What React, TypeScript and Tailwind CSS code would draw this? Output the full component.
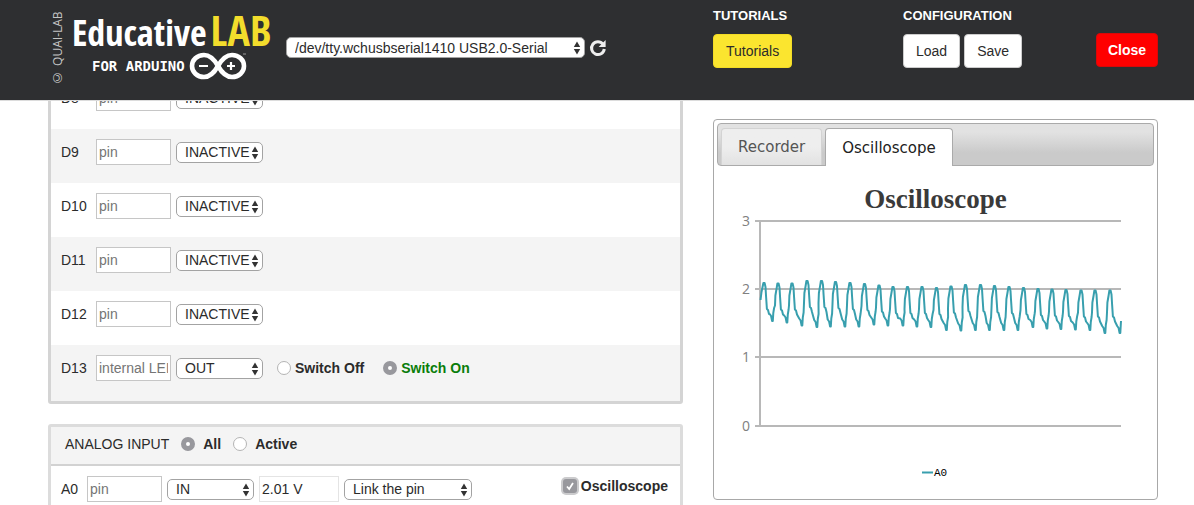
import React from "react";

const peaks: [number, number][] = [
  [47, 67], [61, 67.5], [75, 67.5], [90, 65], [104.5, 65], [118.5, 66], [133, 67],
  [147.5, 68], [162, 69.5], [176, 71], [190.5, 71], [205, 71], [219.5, 72],
  [234, 70.5], [248.5, 69], [263.5, 69], [277.5, 70], [292, 71], [306.5, 72],
  [321, 73], [335, 73.5], [349, 74], [364, 74.5], [378, 74.5], [393, 74.5],
];

const troughs: [number, number][] = [
  [55.5, 105], [70, 106.5], [85, 109.5], [100, 111], [113.5, 110.5], [128, 110.5],
  [142, 110.5], [157, 108.5], [171, 109.5], [186, 109.5], [200, 110.5], [214, 111],
  [229.5, 114], [244, 114.5], [258.5, 114], [272.5, 114], [287, 114], [301, 114],
  [316, 111], [330, 112.5], [344, 113], [358.5, 113.5], [373, 114], [388, 117], [403, 117],
];

function buildTrace() {
  const points: [number, number][] = [[43.5, 84], [44.5, 76]];
  peaks.forEach(([px, py], i) => {
    const [tx, ty] = troughs[i];
    if (i > 0) {
      const [lx, ly] = troughs[i - 1];
      points.push([lx + 0.8, ly - 8], [lx + 1.6, ly - 13], [px - 3, py + 22], [px - 2.6, py + 12], [px - 1.4, py + 5]);
    }
    points.push([px - 0.6, py], [px + 0.6, py], [px + 1.5, py + 4], [px + 2.1, py + 14], [px + 2.9, py + 26]);
    points.push([px + 4, py + 27], [px + 5, py + 31], [tx - 2.8, ty - 7], [tx - 1.4, ty - 5], [tx - 0.4, ty]);
    points.push([tx + 0.3, ty]);
  });
  points.push([404, 105]);
  return points.map(([x, y]) => `${x.toFixed(1)},${y.toFixed(1)}`).join(" ");
}

const trace = buildTrace();

type SelectProps = { label: string; value: string; options?: string[]; className: string };

function Select({ label, value, options = [], className }: SelectProps) {
  return (
    <span className={`relative inline-flex ${className}`}>
      <select
        aria-label={label}
        defaultValue={value}
        className="h-[21px] w-full appearance-none rounded-[5px] border border-[#a3a3a3] bg-white pr-2.5 pl-2 text-sm leading-[18px] text-[#2b2b2b]"
      >
        {[value, ...options].map((o) => (
          <option key={o}>{o}</option>
        ))}
      </select>
      <svg viewBox="0 0 8 14" className="pointer-events-none absolute top-1 right-1 h-3.5 w-2" fill="#333">
        <path d="M4 .5 7.200 6H.8zM4 13.500.8 8h6.400z" />
      </svg>
    </span>
  );
}

function PinInput({ name, placeholder }: { name: string; placeholder: string }) {
  return (
    <input
      id={`pin-${name}`}
      type="text"
      placeholder={placeholder}
      className="h-[26px] w-[75px] border border-[#c6c6c6] bg-white px-[2px] text-sm placeholder:text-[#757575]"
    />
  );
}

const radioClass =
  "size-3.5 appearance-none rounded-full border border-[#b4b4b4] bg-white checked:border-[5px] checked:border-[#98989d]";

type Digital = { name: string; placeholder?: string; mode?: string; shaded?: boolean; last?: boolean };

const digitalPins: Digital[] = [
  { name: "D8" },
  { name: "D9", shaded: true },
  { name: "D10" },
  { name: "D11", shaded: true },
  { name: "D12" },
  { name: "D13", placeholder: "internal LED", mode: "OUT", shaded: true, last: true },
];

function DigitalRow({ name, placeholder = "pin", mode = "INACTIVE", shaded, last }: Digital) {
  return (
    <div className={`flex items-start px-2.5 pt-2.5 ${last ? "h-14" : "h-[54px]"} ${shaded ? "bg-[#f4f4f4]" : "bg-white"}`}>
      <div className="flex items-center">
        <label htmlFor={`pin-${name}`} className="w-[35px]">{name}</label>
        <PinInput name={name} placeholder={placeholder} />
        <Select label={`${name} mode`} value={mode} options={["IN"]} className="ml-[5px] w-[87px]" />
        {mode === "OUT" && (
          <div className="ml-3.5 flex items-center font-bold">
            <label className="flex items-center gap-1">
              <input type="radio" name={`${name}-state`} className={radioClass} />
              Switch Off
            </label>
            <label className="ml-[19px] flex items-center gap-1 text-[#0a7d0a]">
              <input type="radio" name={`${name}-state`} defaultChecked className={radioClass} />
              Switch On
            </label>
          </div>
        )}
      </div>
    </div>
  );
}

function Logo() {
  return (
    <div className="flex h-[100px] items-start gap-1.5">
      <span className="mt-3.5 ml-0.5 h-[72px] w-4 rotate-180 text-center font-['Open_Sans',sans-serif] text-xs leading-4 whitespace-nowrap text-[#c4c4c4] [writing-mode:vertical-rl]">
        © QUAI-LAB
      </span>
      <div className="w-[206px] whitespace-nowrap">
        <h1 className="mt-2.5 flex h-10 items-baseline gap-1 font-['Open_Sans_Condensed','Noto_Sans_Condensed','Roboto_Condensed','Open_Sans',sans-serif] text-[36px] leading-10 font-bold text-white">
          <span>Educative</span>
          <span className="text-[42px] text-[#f3dd2c]">LAB</span>
        </h1>
        <div className="flex items-center gap-1 pl-5">
          <span className="font-['DejaVu_Sans_Mono',monospace] text-sm leading-8 font-bold text-white">FOR ARDUINO</span>
          <svg viewBox="0 0 58 30" className="h-[30px] w-[58px]" fill="none" stroke="#fff">
            <path
              d="M29 15C25 8 21 4 15 4 8 4 3 9 3 15s5 11 12 11c6 0 10-4 14-11s8-11 14-11c7 0 12 5 12 11s-5 11-12 11c-6 0-10-4-14-11Z"
              strokeWidth="4.6"
            />
            <path d="M10 15h9M38 15h8M42 11v8" strokeWidth="2.2" />
            <path d="M54 3h3" strokeWidth="1" stroke="#999" />
          </svg>
        </div>
      </div>
    </div>
  );
}

const columns = "grid grid-cols-[635fr_445fr] gap-[30px] pr-9 pl-12";
const buttonBase = "h-[34px] rounded border px-3 text-sm text-[#2b2b2b]";

export default function App() {
  return (
    <div className="flex h-screen flex-col overflow-hidden bg-white font-['Liberation_Sans',Arial,sans-serif] text-sm text-[#2b2b2b]">
      <header className={`${columns} z-10 h-[101px] shrink-0 border-b border-[#dcdcdc] bg-[#2e2f31]`}>
        <div className="flex items-start">
          <Logo />
          <div className="mt-[37px] ml-2 flex items-center gap-1">
            <Select label="Serial port" value="/dev/tty.wchusbserial1410 USB2.0-Serial" className="w-[299px]" />
            <button type="button" aria-label="Refresh ports">
              <svg viewBox="0 0 18 18" className="size-[18px]" fill="none" stroke="#eee">
                <path d="M14 5.2A6.4 6.4 0 1 0 15.3 10" strokeWidth="3" />
                <path d="M16.6 1v7H9.6z" fill="#eee" stroke="none" />
              </svg>
            </button>
          </div>
        </div>
        <div className="flex items-start">
          <section className="w-[190px] pt-1.5">
            <h2 className="mb-2 text-[13px] leading-5 font-bold text-white">TUTORIALS</h2>
            <button type="button" className={`${buttonBase} border-[#f3dc25] bg-[#fbe52f]`}>Tutorials</button>
          </section>
          <section className="pt-1.5">
            <h2 className="mb-2 text-[13px] leading-5 font-bold text-white">CONFIGURATION</h2>
            <div className="flex gap-1">
              <button type="button" className={`${buttonBase} border-[#ccc] bg-white`}>Load</button>
              <button type="button" className={`${buttonBase} border-[#ccc] bg-white`}>Save</button>
            </div>
          </section>
          <button type="button" className="mt-[33px] ml-auto h-[34px] rounded border border-[#d90808] bg-[#ff0000] px-[11px] text-sm font-bold text-white">
            Close
          </button>
        </div>
      </header>

      <main className={`${columns} items-start`}>
        <div className="-mt-[29px] flex flex-col gap-5">
          <section aria-label="Digital pins" className="rounded-[3px] border-[3px] border-[#d4d4d4]">
            {digitalPins.map((pin) => (
              <DigitalRow key={pin.name} {...pin} />
            ))}
          </section>

          <section className="rounded-[3px] border-[3px] border-[#dcdcdc]">
            <div className="flex h-[39px] items-center border-b-2 border-[#d2d2d2] bg-[#f4f4f4] px-3.5 pb-1">
              <h2>ANALOG INPUT</h2>
              <label className="ml-3 flex items-center gap-2 font-bold">
                <input type="radio" name="analog-filter" defaultChecked className={radioClass} />
                All
              </label>
              <label className="ml-3 flex items-center gap-2 font-bold">
                <input type="radio" name="analog-filter" className={radioClass} />
                Active
              </label>
            </div>
            <div className="flex h-[54px] items-start pt-2.5 pr-3 pl-2.5">
              <div className="flex items-center">
                <label htmlFor="pin-A0" className="w-[26px]">A0</label>
                <PinInput name="A0" placeholder="pin" />
                <Select label="A0 mode" value="IN" options={["INACTIVE"]} className="ml-[5px] w-[87px]" />
                <input
                  aria-label="A0 value"
                  readOnly
                  value="2.01 V"
                  className="ml-[5px] h-[26px] w-20 border border-[#e4e4e4] bg-white px-[2px] text-sm"
                />
                <Select label="A0 link" value="Link the pin" className="ml-[5px] w-32" />
              </div>
              <label className="ml-auto flex items-center gap-1 font-bold">
                <span className="relative inline-flex">
                  <input
                    type="checkbox"
                    defaultChecked
                    className="size-3.5 appearance-none rounded-[3px] bg-[#98989d] ring-2 ring-[#cbcbcd]"
                  />
                  <svg viewBox="0 0 14 14" className="pointer-events-none absolute inset-0 size-3.5" fill="none" stroke="#fff" strokeWidth="1.8">
                    <path d="M4 7.500 6.200 10 10 4" />
                  </svg>
                </span>
                Oscilloscope
              </label>
            </div>
          </section>
        </div>

        <section className="mt-[18px] rounded border border-[#a8a8a8] p-[3px]">
          <div role="tablist" className="flex h-[43px] items-end gap-[3px] rounded border border-[#aaa] bg-linear-to-b from-[#e2e2e2] from-20% to-[#cacaca] to-70% pl-[3px] font-['DejaVu_Sans',Verdana,sans-serif] text-[15px]">
            <button
              type="button"
              role="tab"
              aria-selected="false"
              className="h-[37px] rounded-t border border-b-0 border-[#d3d3d3] bg-linear-to-b from-[#eeeeee] from-50% to-[#e2e2e2] to-100% px-4 pt-0.5 text-[#555]"
            >
              Recorder
            </button>
            <button
              type="button"
              role="tab"
              aria-selected="true"
              className="-mb-px h-[38px] rounded-t border border-b-0 border-[#aaa] bg-white px-4 pt-0.5 text-[#212121]"
            >
              Oscilloscope
            </button>
          </div>
          <h2 className="pt-4 text-center font-['Liberation_Serif',serif] text-[27px] leading-[34px] font-bold text-[#3a3a3a]">
            Oscilloscope
          </h2>
          <svg viewBox="0 0 437 280" className="block w-full overflow-visible" role="img" aria-label="A0 voltage">
            <g stroke="#b8b8b8" strokeWidth="2">
              <path d="M38 5H404M38 73H404M38 141H404M38 210H404M43 5V210" />
            </g>
            <g fill="#808080" fontSize="14" textAnchor="end" fontFamily="'Open Sans', sans-serif">
              <text x="33" y="10">3</text>
              <text x="33" y="78">2</text>
              <text x="33" y="146">1</text>
              <text x="33" y="215">0</text>
            </g>
            <polyline points={trace} fill="none" stroke="#389fae" strokeWidth="2" strokeLinejoin="round" />
            <path d="M205 256.500H216" stroke="#389fae" strokeWidth="2" />
            <text x="217" y="260" fontSize="11" fontFamily="'Liberation Mono', monospace" fill="#000">A0</text>
          </svg>
        </section>
      </main>
    </div>
  );
}
